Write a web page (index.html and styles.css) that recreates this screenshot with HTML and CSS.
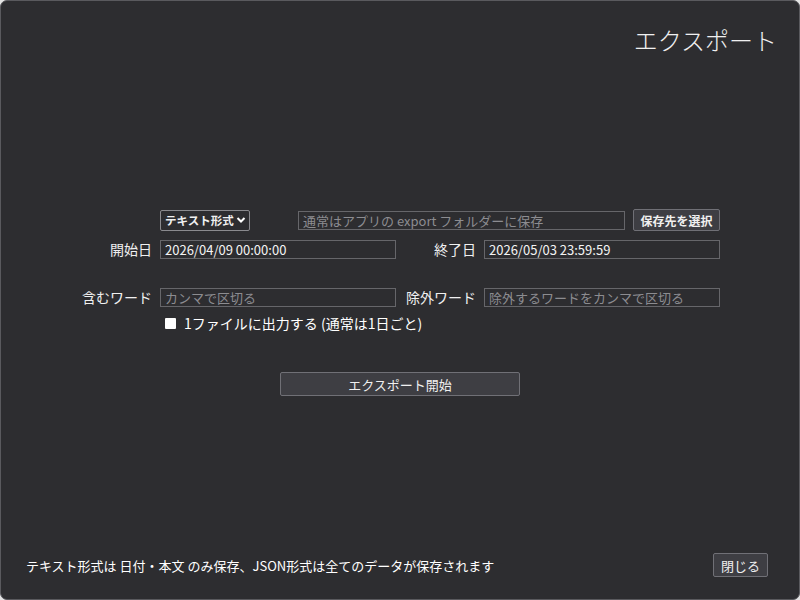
FILE: index.html
```html
<!DOCTYPE html>
<html lang="ja">
<head>
  <meta charset="UTF-8">
  <title>エクスポート</title>
  <link rel="stylesheet" href="styles.css">
</head>
<body>

  <div class="window">
    <h1 class="title">エクスポート</h1>

    <div class="export-form">
      <div class="row-top">
        <div class="format-select">
          <span>テキスト形式</span>
          <svg width="10" height="8" viewBox="0 0 10 8"><path d="M1.5 2 L5 5.5 L8.5 2" fill="none" stroke="#fff" stroke-width="2"/></svg>
        </div>
        <input class="path-input" type="text" placeholder="通常はアプリの export フォルダーに保存">
        <button class="btn small">保存先を選択</button>
      </div>

      <label class="label">開始日</label>
      <input type="text" value="2026/04/09 00:00:00">
      <label class="label">終了日</label>
      <input type="text" value="2026/05/03 23:59:59">

      <label class="label gap">含むワード</label>
      <input class="gap" type="text" placeholder="カンマで区切る">
      <label class="label gap">除外ワード</label>
      <input class="gap" type="text" placeholder="除外するワードをカンマで区切る">

      <div class="check-row">
        <span class="box"></span>
        <span>1ファイルに出力する (通常は1日ごと)</span>
      </div>
    </div>

    <div class="actions">
      <button class="btn wide">エクスポート開始</button>
    </div>

    <div class="footer">
      <p class="note">テキスト形式は 日付・本文 のみ保存、JSON形式は全てのデータが保存されます</p>
      <button class="btn close">閉じる</button>
    </div>
  </div>

</body>
</html>
```

FILE: styles.css
```css
html {
  background: #e4e4e4;
}

body {
  margin: 0;
  font-family: "Noto Sans CJK JP", "Noto Sans", sans-serif;
  color: #f0f0f0;
}

.window {
  width: 800px;
  height: 600px;
  box-sizing: border-box;
  border: 1px solid #5a5a5e;
  border-radius: 7px;
  background: #2d2d30;
  display: flex;
  flex-direction: column;
}

.title {
  margin: 22px 22px 0 0;
  text-align: right;
  font-size: 24px;
  font-weight: 300;
  line-height: 34px;
}

.export-form {
  margin: 152px auto 0;
  display: grid;
  grid-template-columns: 72px 236px 72px 236px;
  column-gap: 8px;
  row-gap: 8px;
  align-items: center;
}

.row-top {
  grid-column: 2 / 5;
  display: flex;
  align-items: center;
}

/* format picker, drawn as a plain box with a chevron */
.format-select {
  width: 90px;
  height: 21px;
  box-sizing: border-box;
  border: 1px solid #8a8a8e;
  border-radius: 2px;
  display: flex;
  align-items: center;
  justify-content: space-between;
  padding: 0 3px 0 4px;
  font-size: 11.5px;
  font-weight: 700;
  white-space: nowrap;
}

.label {
  text-align: right;
  font-size: 14px;
  line-height: 20px;
}

input {
  height: 19px;
  box-sizing: border-box;
  margin: 0;
  padding: 0 4px;
  background: #2d2d30;
  border: 1px solid #66666a;
  color: #f4f4f4;
  font-family: inherit;
  font-size: 13px;
  outline: none;
}

input::placeholder {
  color: #8c8c90;
}

.path-input {
  width: 327px;
  margin-left: 48px;
}

.gap {
  margin-top: 20px;
}

.btn {
  background: #3e3e43;
  border: 1px solid #707076;
  border-radius: 2px;
  color: #f0f0f0;
  font-family: inherit;
  font-size: 13px;
  padding: 0;
  cursor: pointer;
}

.btn.small {
  margin-left: 8px;
  width: 87px;
  height: 22px;
  font-weight: 700;
  font-size: 12px;
}

.check-row {
  grid-column: 2 / 5;
  display: flex;
  align-items: center;
  gap: 8px;
  padding-left: 5px;
  margin-top: -1px;
  font-size: 14px;
  line-height: 18px;
  color: #fff;
}

.box {
  width: 11px;
  height: 11px;
  background: #fff;
  border-radius: 1px;
}

.actions {
  display: flex;
  justify-content: center;
  margin-top: 40px;
}

.btn.wide {
  width: 240px;
  height: 24px;
}

.footer {
  margin-top: auto;
  display: flex;
  align-items: center;
  justify-content: space-between;
  padding: 0 31px 22px 25px;
}

.note {
  margin: 0;
  font-size: 13px;
  color: #fff;
}

.btn.close {
  width: 55px;
  height: 24px;
}
```
